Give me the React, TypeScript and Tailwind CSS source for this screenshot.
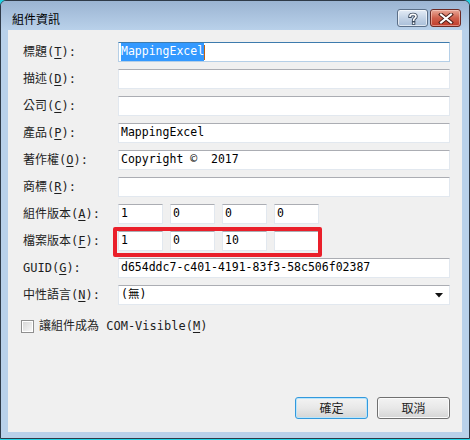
import type { ReactNode } from "react";

const labelFont = { fontFamily: "'DejaVu Sans Mono', 'Noto Sans CJK TC', monospace" };
const cjkFont = { fontFamily: "'Noto Sans CJK TC', sans-serif" };

function Label({ text, hot, tail }: { text: string; hot: string; tail?: string }) {
  return (
    <div className="flex h-[20px] items-center whitespace-pre text-[12px] text-[#1e1e1e]" style={labelFont}>
      {text}(<span className="underline underline-offset-2">{hot}</span>){tail ?? ":"}
    </div>
  );
}

function Box({ children, className = "" }: { children?: ReactNode; className?: string }) {
  return (
    <div
      className={`flex h-[20px] items-center whitespace-pre border border-[#e2e8ef] border-t-[#abadb3] bg-white pl-[2px] text-[11.5px] text-black ${className}`}
      style={labelFont}
    >
      {children}
    </div>
  );
}

function Version({ values }: { values: string[] }) {
  return (
    <div className="flex gap-[7px]">
      {values.map((v, i) => (
        <Box key={i} className="w-[45px]">
          {v}
        </Box>
      ))}
    </div>
  );
}

function HelpButton() {
  return (
    <div className="flex h-[18px] w-[31px] items-center justify-center rounded-[3px] border border-[#5b6f88] bg-gradient-to-b from-[#e4ecf6] via-[#c3d3e6] to-[#a9bfd9] shadow-[inset_0_0_0_1px_rgba(255,255,255,0.6)]">
      <svg width="12" height="13" viewBox="0 0 12 13">
        <path
          d="M3 4.2 C3 1.8 9 1.6 9 4.4 C9 6.2 6.6 6.3 6.6 8.2"
          fill="none"
          stroke="#3b4a5e"
          strokeWidth="3.4"
          strokeLinecap="square"
        />
        <path
          d="M3 4.2 C3 1.8 9 1.6 9 4.4 C9 6.2 6.6 6.3 6.6 8.2"
          fill="none"
          stroke="#ffffff"
          strokeWidth="1.6"
          strokeLinecap="square"
        />
        <rect x="4.9" y="9.6" width="3.4" height="3.2" fill="#3b4a5e" />
        <rect x="5.8" y="10.4" width="1.6" height="1.6" fill="#ffffff" />
      </svg>
    </div>
  );
}

function CloseButton() {
  return (
    <div className="flex h-[18px] w-[31px] items-center justify-center rounded-[3px] border border-[#6d2a24] bg-gradient-to-b from-[#e8a898] via-[#cf5f4b] to-[#c03a2a] shadow-[inset_0_0_0_1px_rgba(255,220,210,0.5)]">
      <svg width="16" height="11" viewBox="0 0 16 11">
        <path d="M3 1.5 L13 9.5 M13 1.5 L3 9.5" stroke="#4a1d18" strokeWidth="4" strokeLinecap="square" />
        <path d="M3 1.5 L13 9.5 M13 1.5 L3 9.5" stroke="#ffffff" strokeWidth="2" strokeLinecap="square" />
      </svg>
    </div>
  );
}

function Button({ text, primary }: { text: string; primary?: boolean }) {
  return (
    <div
      className={`flex h-[22px] w-[73px] items-center justify-center rounded-[3px] border bg-gradient-to-b from-[#f3f3f3] via-[#e8e8e8] to-[#d5d5d5] text-[12px] text-[#1e1e1e] ${
        primary ? "border-[#3399dd] shadow-[inset_0_0_0_1px_#b9e5fb]" : "border-[#707070] shadow-[inset_0_0_0_1px_#fbfbfb]"
      }`}
      style={cjkFont}
    >
      {text}
    </div>
  );
}

export default function App() {
  return (
    <div className="h-[440px] w-[470px] bg-[#22d3e6]">
      <div className="flex h-[439px] w-[470px] flex-col rounded-t-[6px] border border-[#2f3a48] bg-[#b9d1ea]">
        {/* title bar */}
        <div className="flex h-[29px] items-start rounded-t-[5px] bg-gradient-to-b from-[#9bb4d2] to-[#b9d1ea] pl-[11px] pr-[8px]">
          <div className="pt-[10px] text-[12px] leading-[16px] text-black" style={cjkFont}>
            組件資訊
          </div>
          <div className="ml-auto flex gap-[2px] pt-[8px]">
            <HelpButton />
            <CloseButton />
          </div>
        </div>

        {/* client area */}
        <div className="mx-[7px] flex flex-1 flex-col bg-[#f0f0f0] pb-[13px] pl-[15px] pr-[12px] pt-[12px]">
          <div className="grid grid-cols-[95px_1fr] gap-y-[7px]">
            <Label text="標題" hot="T" />
            <div className="flex h-[20px] items-center border border-[#b5cfe7] border-t-[#3d7bad] bg-white pl-[2px] text-[11.5px]" style={labelFont}>
              <span className="bg-[#3399ff] text-white">MappingExcel</span>
              <span className="h-[15px] w-[1px] bg-[#c06010]" />
            </div>

            <Label text="描述" hot="D" />
            <Box />

            <Label text="公司" hot="C" />
            <Box />

            <Label text="產品" hot="P" />
            <Box>MappingExcel</Box>

            <Label text="著作權" hot="O" />
            <Box>Copyright ©  2017</Box>

            <Label text="商標" hot="R" />
            <Box />

            <Label text="組件版本" hot="A" />
            <Version values={["1", "0", "0", "0"]} />

            <Label text="檔案版本" hot="F" />
            <div className="relative">
              <Version values={["1", "0", "10", ""]} />
              <div className="absolute left-[-5px] top-[-4px] h-[30px] w-[209px] rounded-[2px] border-[4px] border-[#ea1f2a]" />
            </div>

            <Label text="GUID" hot="G" />
            <Box>d654ddc7-c401-4191-83f3-58c506f02387</Box>

            <Label text="中性語言" hot="N" />
            <Box className="justify-between pr-[6px]">
              <span>(無)</span>
              <svg width="8" height="5" viewBox="0 0 8 5">
                <path d="M0 0 H8 L4 4.5 Z" fill="#111" />
              </svg>
            </Box>
          </div>

          <div className="ml-[-2px] mt-[12px] flex items-center gap-[5px]">
            <div className="flex h-[13px] w-[13px] items-center justify-center border border-[#8f8f8f] bg-white">
              <div className="h-[9px] w-[9px] bg-gradient-to-br from-[#d8d8d8] to-[#f7f7f7]" />
            </div>
            <div className="whitespace-pre text-[12px] text-[#1e1e1e]" style={labelFont}>
              讓組件成為 COM-Visible(<span className="underline underline-offset-2">M</span>)
            </div>
          </div>

          <div className="mt-auto flex justify-end gap-[9px]">
            <Button text="確定" primary />
            <Button text="取消" />
          </div>
        </div>
        <div className="h-[6px]" />
      </div>
    </div>
  );
}
